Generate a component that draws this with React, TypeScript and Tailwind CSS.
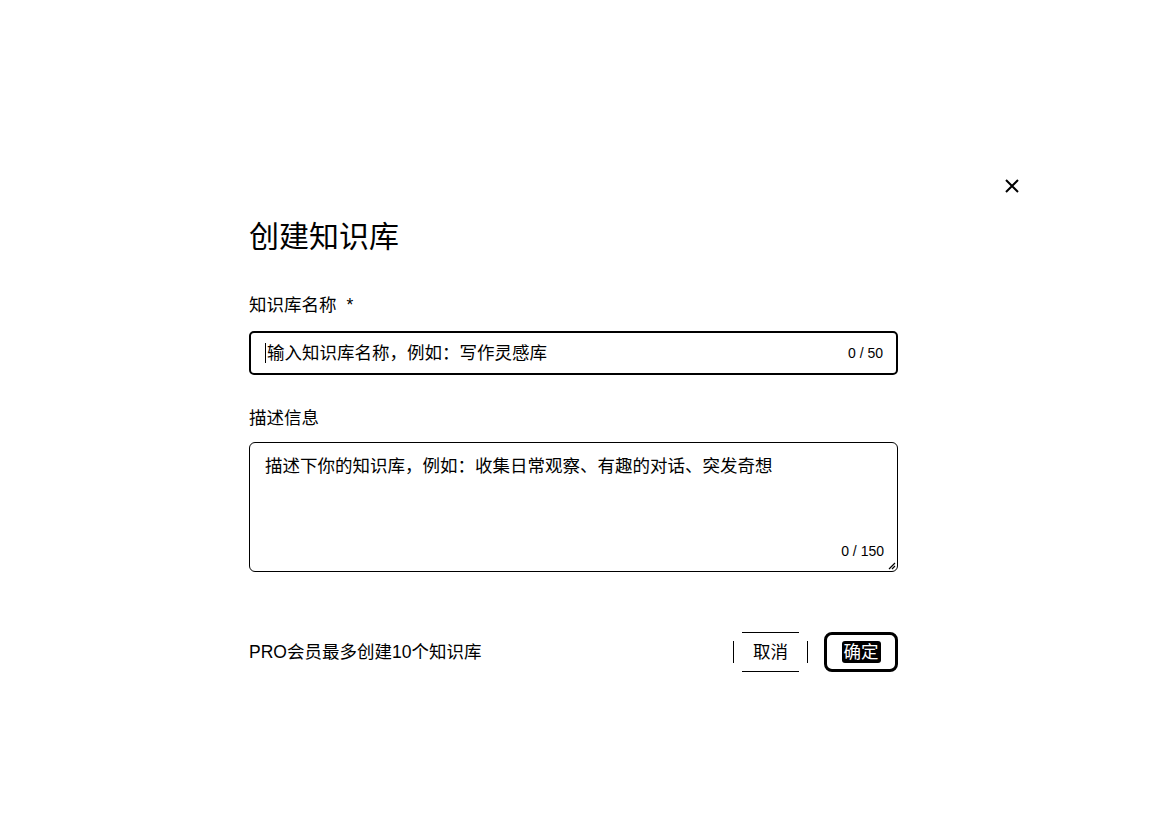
import React from "react";

const font = { fontFamily: '"Liberation Sans", "Noto Sans CJK SC", sans-serif' };

export default function App() {
  return (
    <div className="w-full h-[823px] bg-white text-black" style={font}>
      <div className="ml-[249px] w-[770px] pt-[179px]">
        <div className="flex justify-end h-[14px]">
          <svg width="14" height="14" viewBox="0 0 14 14">
            <path d="M1 1 L13 13 M13 1 L1 13" stroke="black" strokeWidth="2" fill="none" />
          </svg>
        </div>
        <div className="w-[649px]">
          <h1 className="text-[30px] leading-[36px] mt-[26px]">创建知识库</h1>

          <div className="mt-[38px] text-[17.5px] leading-[24px] flex items-center">
            <span>知识库名称</span>
            <span className="ml-[10px]">*</span>
          </div>
          <div className="mt-[14px] h-[44px] border-2 border-black rounded-[5px] flex items-center pl-[14px] pr-[13px]">
            <span className="w-[1px] h-[20px] bg-black mr-[1px]"></span>
            <span className="text-[17.5px] flex-1">输入知识库名称，例如：写作灵感库</span>
            <span className="text-[14px]">0 / 50</span>
          </div>

          <div className="mt-[31px] text-[17.5px] leading-[24px]">描述信息</div>
          <div className="mt-[12px] h-[130px] border border-black rounded-[6px] relative pl-[15px] pt-[11px]">
            <div className="text-[17.5px] leading-[24px]">描述下你的知识库，例如：收集日常观察、有趣的对话、突发奇想</div>
            <span className="absolute right-[13px] bottom-[12px] text-[14px] leading-[16px]">0 / 150</span>
            <svg className="absolute right-[1px] bottom-[1px]" width="8" height="8" viewBox="0 0 8 8">
              <path d="M7 1 L1 7 M7 4 L4 7" stroke="black" strokeWidth="1.2" fill="none" />
            </svg>
          </div>

          <div className="mt-[60px] flex items-center justify-between">
            <span className="text-[17.5px]">PRO会员最多创建10个知识库</span>
            <div className="flex items-center gap-[16px]">
              <div className="flex items-center h-[40px]">
                <span className="w-[1px] h-[22px] bg-black"></span>
                <div className="mx-[8px] h-[40px] w-[57px] border-y border-black flex items-center justify-center text-[17.5px]">取消</div>
                <span className="w-[1px] h-[22px] bg-black"></span>
              </div>
              <div className="h-[40px] w-[74px] border-[3px] border-black rounded-[8px] flex items-center justify-center">
                <span className="bg-black text-white text-[17.5px] leading-[22px] px-[2px] rounded-[3px]">确定</span>
              </div>
            </div>
          </div>
        </div>
      </div>
    </div>
  );
}
